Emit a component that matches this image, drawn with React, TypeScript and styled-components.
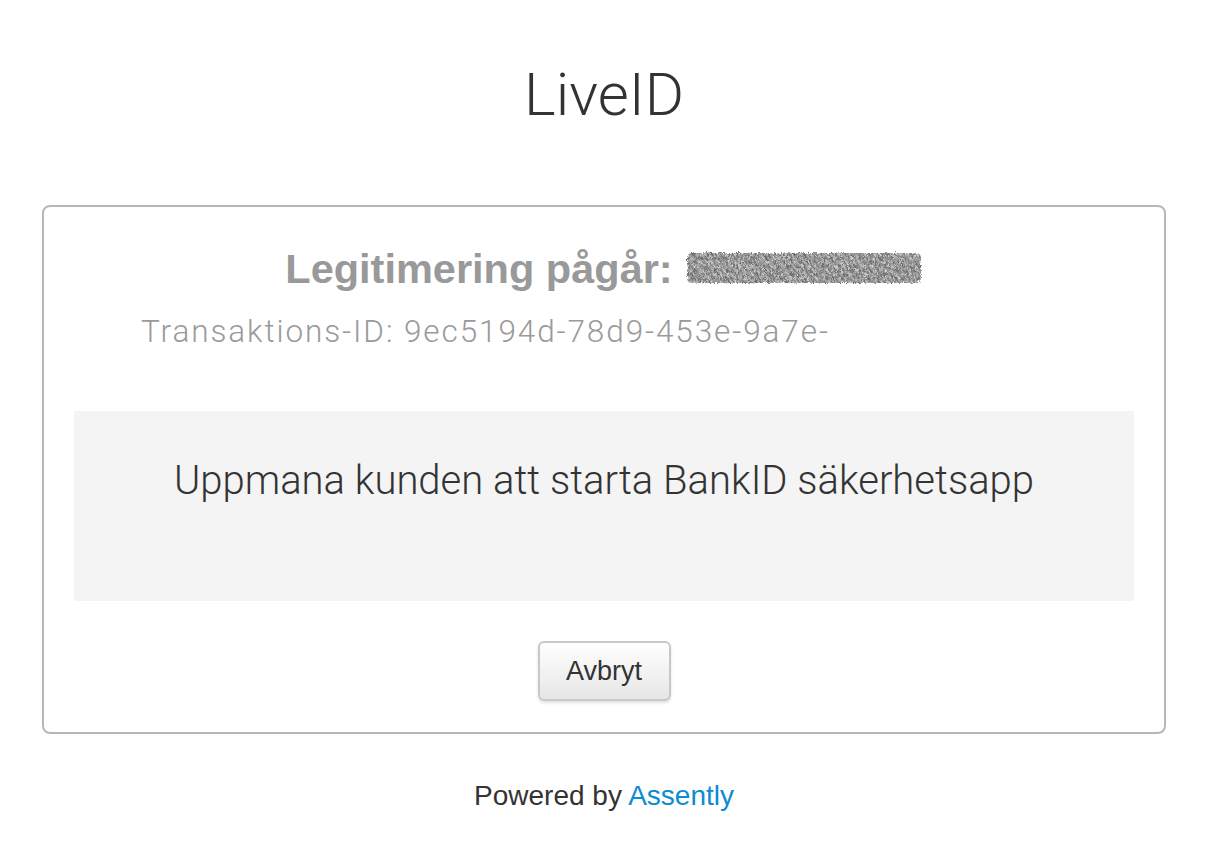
import React from "react";
import styled, { createGlobalStyle } from "styled-components";

const GlobalStyle = createGlobalStyle`
  html, body {
    margin: 0;
    padding: 0;
    background: #fff;
  }
  body {
    font-family: "Liberation Sans", Arial, sans-serif;
    color: #333;
  }
`;

const Redacted = () => (
  <Blot width="240" height="38" viewBox="0 0 240 38" aria-hidden="true">
    <defs>
      <filter id="grain" x="0" y="0" width="100%" height="100%">
        <feTurbulence type="fractalNoise" baseFrequency="0.7 0.25" numOctaves="3" seed="7" />
        <feColorMatrix
          type="matrix"
          values="0 0 0 0 0.62  0 0 0 0 0.62  0 0 0 0 0.62  0 0 0 -2.2 1.55"
        />
        <feComposite in2="SourceGraphic" operator="in" />
      </filter>
      <filter id="rough">
        <feTurbulence type="turbulence" baseFrequency="0.4" numOctaves="2" seed="2" result="n" />
        <feDisplacementMap in="SourceGraphic" in2="n" scale="4" />
      </filter>
    </defs>
    <g filter="url(#rough)">
      <rect x="3" y="4" width="234" height="30" rx="5" fill="#6c6c6c" />
      <rect x="3" y="4" width="234" height="30" rx="5" fill="#a8a8a8" filter="url(#grain)" />
    </g>
  </Blot>
);

export default function App() {
  return (
    <>
      <GlobalStyle />
      <Page>
        <Title>LiveID</Title>
        <Card>
          <Heading>
            Legitimering pågår: <Redacted />
          </Heading>
          <TransactionId>Transaktions-ID: 9ec5194d-78d9-453e-9a7e-</TransactionId>
          <StatusPanel>
            <StatusText>Uppmana kunden att starta BankID säkerhetsapp</StatusText>
          </StatusPanel>
          <Actions>
            <CancelButton type="button">Avbryt</CancelButton>
          </Actions>
        </Card>
        <Footer>
          Powered by <FooterLink href="#">Assently</FooterLink>
        </Footer>
      </Page>
    </>
  );
}

const Page = styled.div`
  display: flex;
  flex-direction: column;
  align-items: stretch;
  padding: 0 48px 0 42px;
`;

const Title = styled.h1`
  margin: 63px 0 0;
  height: 142px;
  font-family: Roboto, "Liberation Sans", sans-serif;
  font-weight: 300;
  font-size: 60px;
  line-height: 64px;
  text-align: center;
  color: #333;
`;

const Card = styled.div`
  display: flex;
  flex-direction: column;
  height: 529px;
  box-sizing: border-box;
  border: 2px solid #b7b7b7;
  border-radius: 8px;
  padding: 0 30px;
`;

const Heading = styled.h2`
  display: flex;
  justify-content: center;
  align-items: center;
  gap: 10px;
  margin: 38px 0 0;
  font-family: "Liberation Sans", Arial, sans-serif;
  font-weight: 700;
  font-size: 41.5px;
  line-height: 48px;
  color: #999;
`;

const Blot = styled.svg`
  display: block;
  margin-top: -4px;
`;

const TransactionId = styled.div`
  margin: 19px 0 0;
  padding-left: 67px;
  font-family: Roboto, "Liberation Sans", sans-serif;
  font-weight: 300;
  font-size: 31.5px;
  letter-spacing: 1.9px;
  line-height: 40px;
  color: #9a9a9a;
`;

const StatusPanel = styled.div`
  display: flex;
  justify-content: center;
  height: 190px;
  margin-top: 59px;
  background: #f4f4f4;
`;

const StatusText = styled.p`
  margin: 47px 0 0;
  font-family: Roboto, "Liberation Sans", sans-serif;
  font-weight: 300;
  font-size: 40px;
  line-height: 46px;
  color: #333;
`;

const Actions = styled.div`
  display: flex;
  justify-content: center;
  margin-top: 40px;
`;

const CancelButton = styled.button`
  width: 133px;
  height: 60px;
  font-family: "Liberation Sans", Arial, sans-serif;
  font-size: 27px;
  color: #333;
  background: linear-gradient(to bottom, #ffffff, #e6e6e6);
  border: 2px solid #c8c8c8;
  border-radius: 6px;
  box-shadow: 0 2px 3px rgba(0, 0, 0, 0.12);
  cursor: pointer;
`;

const Footer = styled.div`
  margin-top: 42px;
  text-align: center;
  font-family: "Liberation Sans", Arial, sans-serif;
  font-size: 28px;
  line-height: 40px;
  color: #333;
`;

const FooterLink = styled.a`
  color: #0a8dd0;
  text-decoration: none;
`;
